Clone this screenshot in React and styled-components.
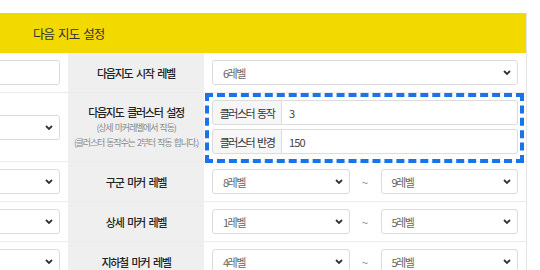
import React from "react";
import styled, { createGlobalStyle } from "styled-components";

const GlobalStyle = createGlobalStyle`
  html, body {
    margin: 0;
    padding: 0;
    background: #ffffff;
    font-family: "Noto Sans CJK KR", "Noto Sans", sans-serif;
  }
`;

const Chevron = () => (
  <svg width="8" height="5" viewBox="0 0 8 5">
    <path d="M1 1l3 3 3-3" fill="none" stroke="#333" strokeWidth="1.8" />
  </svg>
);

const Select = ({ value }) => (
  <SelectBox>
    <span>{value}</span>
    <Chevron />
  </SelectBox>
);

const App = () => {
  return (
    <Page>
      <GlobalStyle />
      <Panel>
        <Header>다음 지도 설정</Header>
        <Table>
          <Row>
            <Cell>
              <TextBox />
            </Cell>
            <LabelCell>
              <Title>다음지도 시작 레벨</Title>
            </LabelCell>
            <Cell>
              <Select value="6레벨" />
            </Cell>
          </Row>
          <Row>
            <Cell>
              <Select value="" />
            </Cell>
            <LabelCell>
              <Title>다음지도 클러스터 설정</Title>
              <Sub>(상세 마커레벨에서 작동)</Sub>
              <Sub>(클러스터 동작수는 2부터 작동 합니다.)</Sub>
            </LabelCell>
            <Cell $highlight>
              <Stack>
                <InputGroup>
                  <Addon>클러스터 동작</Addon>
                  <GroupInput>3</GroupInput>
                </InputGroup>
                <InputGroup>
                  <Addon>클러스터 반경</Addon>
                  <GroupInput>150</GroupInput>
                </InputGroup>
              </Stack>
            </Cell>
          </Row>
          <Row>
            <Cell>
              <Select value="" />
            </Cell>
            <LabelCell>
              <Title>구군 마커 레벨</Title>
            </LabelCell>
            <Cell>
              <Range>
                <Select value="8레벨" />
                <Tilde>~</Tilde>
                <Select value="9레벨" />
              </Range>
            </Cell>
          </Row>
          <Row>
            <Cell>
              <Select value="" />
            </Cell>
            <LabelCell>
              <Title>상세 마커 레벨</Title>
            </LabelCell>
            <Cell>
              <Range>
                <Select value="1레벨" />
                <Tilde>~</Tilde>
                <Select value="5레벨" />
              </Range>
            </Cell>
          </Row>
          <Row>
            <Cell>
              <Select value="" />
            </Cell>
            <LabelCell>
              <Title>지하철 마커 레벨</Title>
            </LabelCell>
            <Cell>
              <Range>
                <Select value="4레벨" />
                <Tilde>~</Tilde>
                <Select value="5레벨" />
              </Range>
            </Cell>
          </Row>
        </Table>
      </Panel>
    </Page>
  );
};

const Page = styled.div`
  width: 540px;
  height: 270px;
  padding-top: 13px;
  box-sizing: border-box;
  overflow: hidden;
`;

const Panel = styled.div`
  width: 527px;
  border-right: 1px solid #e4e4e4;
  box-sizing: border-box;
`;

const Header = styled.div`
  height: 40px;
  background: #f2d900;
  padding-left: 33px;
  display: flex;
  align-items: center;
  font-size: 12.5px;
  letter-spacing: -0.9px;
  word-spacing: 2px;
  color: #333;
`;

const Table = styled.div`
  margin-left: -132px;
`;

const Row = styled.div`
  display: grid;
  grid-template-columns: 200px 136px 1fr;
  border-bottom: 1px solid #ececec;
`;

const Cell = styled.div`
  position: relative;
  padding: 7px 8px;
  display: flex;
  align-items: center;

  ${(p) =>
    p.$highlight &&
    `
    &::after {
      content: "";
      position: absolute;
      top: 0;
      left: 1px;
      right: 2px;
      bottom: -2px;
      border: 4px dashed #1a73e8;
      pointer-events: none;
    }
  `}
`;

const LabelCell = styled.div`
  background: #efefef;
  display: flex;
  flex-direction: column;
  align-items: center;
  justify-content: center;
  text-align: center;
`;

const Title = styled.div`
  font-size: 11px;
  font-weight: 500;
  letter-spacing: -1.3px;
  word-spacing: 2.5px;
  color: #222;
  line-height: 16px;
`;

const Sub = styled.div`
  font-size: 9px;
  letter-spacing: -1.2px;
  word-spacing: 1.5px;
  color: #8a8a8a;
  line-height: 15px;
`;

const SelectBox = styled.div`
  flex: 1;
  height: 25px;
  box-sizing: border-box;
  border: 1px solid #dcdcdc;
  border-radius: 3px;
  background: #fff;
  display: flex;
  align-items: center;
  justify-content: space-between;
  padding: 0 6px 0 10px;
  font-size: 11px;
  letter-spacing: -1.5px;
  color: #666;
`;

const TextBox = styled.div`
  flex: 1;
  height: 25px;
  box-sizing: border-box;
  border: 1px solid #dcdcdc;
  border-radius: 3px;
  background: #fff;
`;

const Stack = styled.div`
  flex: 1;
  display: flex;
  flex-direction: column;
  gap: 4px;
`;

const InputGroup = styled.div`
  display: flex;
  height: 25px;
`;

const Addon = styled.div`
  width: 70px;
  box-sizing: border-box;
  border: 1px solid #dcdcdc;
  border-radius: 3px 0 0 3px;
  background: #f6f6f6;
  display: flex;
  align-items: center;
  justify-content: center;
  font-size: 11px;
  letter-spacing: -1.5px;
  word-spacing: 2px;
  color: #333;
`;

const GroupInput = styled.div`
  flex: 1;
  box-sizing: border-box;
  border: 1px solid #dcdcdc;
  border-left: none;
  border-radius: 0 3px 3px 0;
  background: #fff;
  display: flex;
  align-items: center;
  padding-left: 7px;
  font-size: 11px;
  letter-spacing: -0.8px;
  color: #444;
`;

const Range = styled.div`
  flex: 1;
  display: grid;
  grid-template-columns: 1fr 31px 1fr;
  align-items: center;
`;

const Tilde = styled.div`
  text-align: center;
  font-size: 11px;
  color: #888;
`;

export default App;
